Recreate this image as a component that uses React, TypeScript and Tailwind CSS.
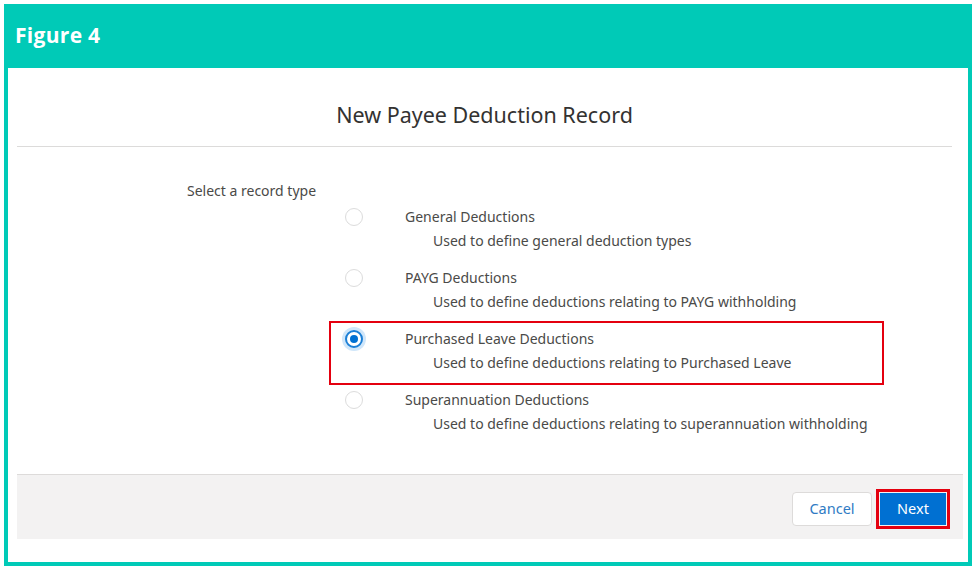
import React from 'react';

const recordTypes = [
  { id: 'general', name: 'General Deductions', desc: 'Used to define general deduction types' },
  { id: 'payg', name: 'PAYG Deductions', desc: 'Used to define deductions relating to PAYG withholding' },
  { id: 'purchased', name: 'Purchased Leave Deductions', desc: 'Used to define deductions relating to Purchased Leave' },
  { id: 'super', name: 'Superannuation Deductions', desc: 'Used to define deductions relating to superannuation withholding' },
];

function Radio({ checked }: { checked: boolean }) {
  if (checked) {
    return (
      <span className="flex h-[18px] w-[18px] items-center justify-center rounded-full border-2 border-[#1b7fd6] bg-white shadow-[0_0_0_3px_#cfe6fa]">
        <span className="h-[8px] w-[8px] rounded-full bg-[#0070d2]" />
      </span>
    );
  }
  return <span className="block h-[18px] w-[18px] rounded-full border border-[#dcdcdc] bg-white" />;
}

export default function App() {
  const selected = 'purchased';

  return (
    <div className="h-[570px] w-[976px] bg-white p-1 font-['Open_Sans','Noto_Sans',sans-serif]">
      <div className="flex h-[562px] w-[968px] flex-col bg-[#00cab7] px-1 pb-1">
        {/* Figure header */}
        <div className="flex h-16 shrink-0 items-center pl-[7px]">
          <span className="text-[21px] font-bold tracking-[0.3px] text-white">Figure 4</span>
        </div>

        {/* Modal body */}
        <div className="flex-1 bg-white pl-[9px] pr-[5px]">
          <div className="w-[935px]">
            <h1 className="pt-[33px] text-center text-[21.5px] leading-[28px] text-[#333231] font-['Noto_Sans',sans-serif]">
              New Payee Deduction Record
            </h1>
            <div className="mt-[17px] h-px bg-[#dcdbda]" />

            <div className="pl-[170px] pt-[34px] text-[14px] text-[#4a4a48] font-['Noto_Sans',sans-serif]">
              <p className="leading-5">Select a record type</p>

              <div className="mt-[6px] pl-[158px]">
                {recordTypes.map((r) => (
                  <div key={r.id} className="relative mb-[17px] flex">
                    {r.id === selected && (
                      <div className="absolute left-[-16px] top-[-8px] h-[64px] w-[555px] border-2 border-[#e4000f]" />
                    )}
                    <div className="pt-px">
                      <Radio checked={r.id === selected} />
                    </div>
                    <div className="ml-[42px]">
                      <p className="leading-5">{r.name}</p>
                      <p className="mt-1 pl-[28px] leading-5">{r.desc}</p>
                    </div>
                  </div>
                ))}
              </div>
            </div>

            {/* Footer */}
            <div className="mr-[-11px] mt-[40px] flex h-[65px] items-center justify-end gap-[4px] border-t border-[#dddbda] bg-[#f3f2f2] pr-[13px] font-['Noto_Sans',sans-serif]">
              <button className="mt-[4px] h-[34px] w-[80px] rounded border border-[#dddbda] bg-white text-[14.5px] text-[#2f7bc4]">
                Cancel
              </button>
              <div className="mt-[4px] border-[3px] border-[#e4000f] p-px">
                <button className="block h-[32px] w-[66px] bg-[#0070d2] text-[14.5px] text-white">Next</button>
              </div>
            </div>
          </div>
        </div>
      </div>
    </div>
  );
}
